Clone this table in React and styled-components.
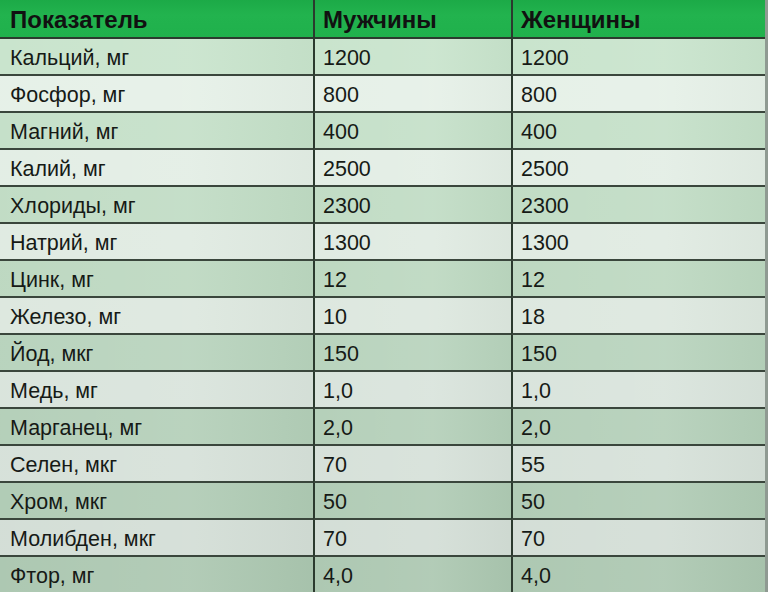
import React from "react";
import styled, { createGlobalStyle } from "styled-components";

const GlobalStyle = createGlobalStyle`
  html, body {
    margin: 0;
    padding: 0;
    background: #b9cfbd;
  }
  body {
    font-family: "Liberation Sans", Arial, sans-serif;
  }
`;

const rows = [
  ["Кальций, мг", "1200", "1200"],
  ["Фосфор, мг", "800", "800"],
  ["Магний, мг", "400", "400"],
  ["Калий, мг", "2500", "2500"],
  ["Хлориды, мг", "2300", "2300"],
  ["Натрий, мг", "1300", "1300"],
  ["Цинк, мг", "12", "12"],
  ["Железо, мг", "10", "18"],
  ["Йод, мкг", "150", "150"],
  ["Медь, мг", "1,0", "1,0"],
  ["Марганец, мг", "2,0", "2,0"],
  ["Селен, мкг", "70", "55"],
  ["Хром, мкг", "50", "50"],
  ["Молибден, мкг", "70", "70"],
  ["Фтор, мг", "4,0", "4,0"],
];

// mix two rgb colours, t from 0 to 1
const mix = (a, b, t) =>
  `rgb(${a.map((v, i) => Math.round(v + (b[i] - v) * t)).join(",")})`;

const shade = (index) => {
  const t = index / (rows.length - 1);
  return index % 2 === 0
    ? mix([199, 227, 203], [170, 198, 175], t)
    : mix([231, 242, 232], [208, 219, 212], t);
};

const Table = styled.div`
  display: grid;
  grid-template-columns: 313px 198px 1fr;
  width: 768px;
  height: 592px;
  overflow: hidden;
  border-right: 3px solid #8f9a92;
  box-sizing: border-box;
`;

const HeaderCell = styled.div`
  height: 39px;
  box-sizing: border-box;
  background: linear-gradient(to bottom, #1caa47, #22b34e 40%, #20b14c);
  border-bottom: 2px solid #2b3a2e;
  border-left: ${(p) => (p.$first ? "none" : "2px solid #2b3a2e")};
  padding-left: ${(p) => (p.$first ? "10px" : "8px")};
  padding-top: 2px;
  display: flex;
  align-items: center;
  font-weight: bold;
  font-size: 24px;
  color: #111;
`;

const Cell = styled.div`
  height: 37px;
  box-sizing: border-box;
  background: ${(p) =>
    `linear-gradient(to right, rgba(255,255,255,0.04), rgba(255,255,255,0.1) 60%, rgba(0,0,0,0.02)), ${shade(p.$index)}`};
  border-bottom: 2px solid #3a463c;
  border-left: ${(p) => (p.$first ? "none" : "2px solid #2b3a2e")};
  padding-left: ${(p) => (p.$first ? "10px" : "8px")};
  padding-top: 3px;
  display: flex;
  align-items: center;
  font-size: 21.5px;
  color: #161a16;
`;

export default function App() {
  return (
    <>
      <GlobalStyle />
      <Table>
        <HeaderCell $first>Показатель</HeaderCell>
        <HeaderCell>Мужчины</HeaderCell>
        <HeaderCell>Женщины</HeaderCell>
        {rows.map((row, i) =>
          row.map((text, j) => (
            <Cell key={`${i}-${j}`} $index={i} $first={j === 0}>
              {text}
            </Cell>
          ))
        )}
      </Table>
    </>
  );
}
